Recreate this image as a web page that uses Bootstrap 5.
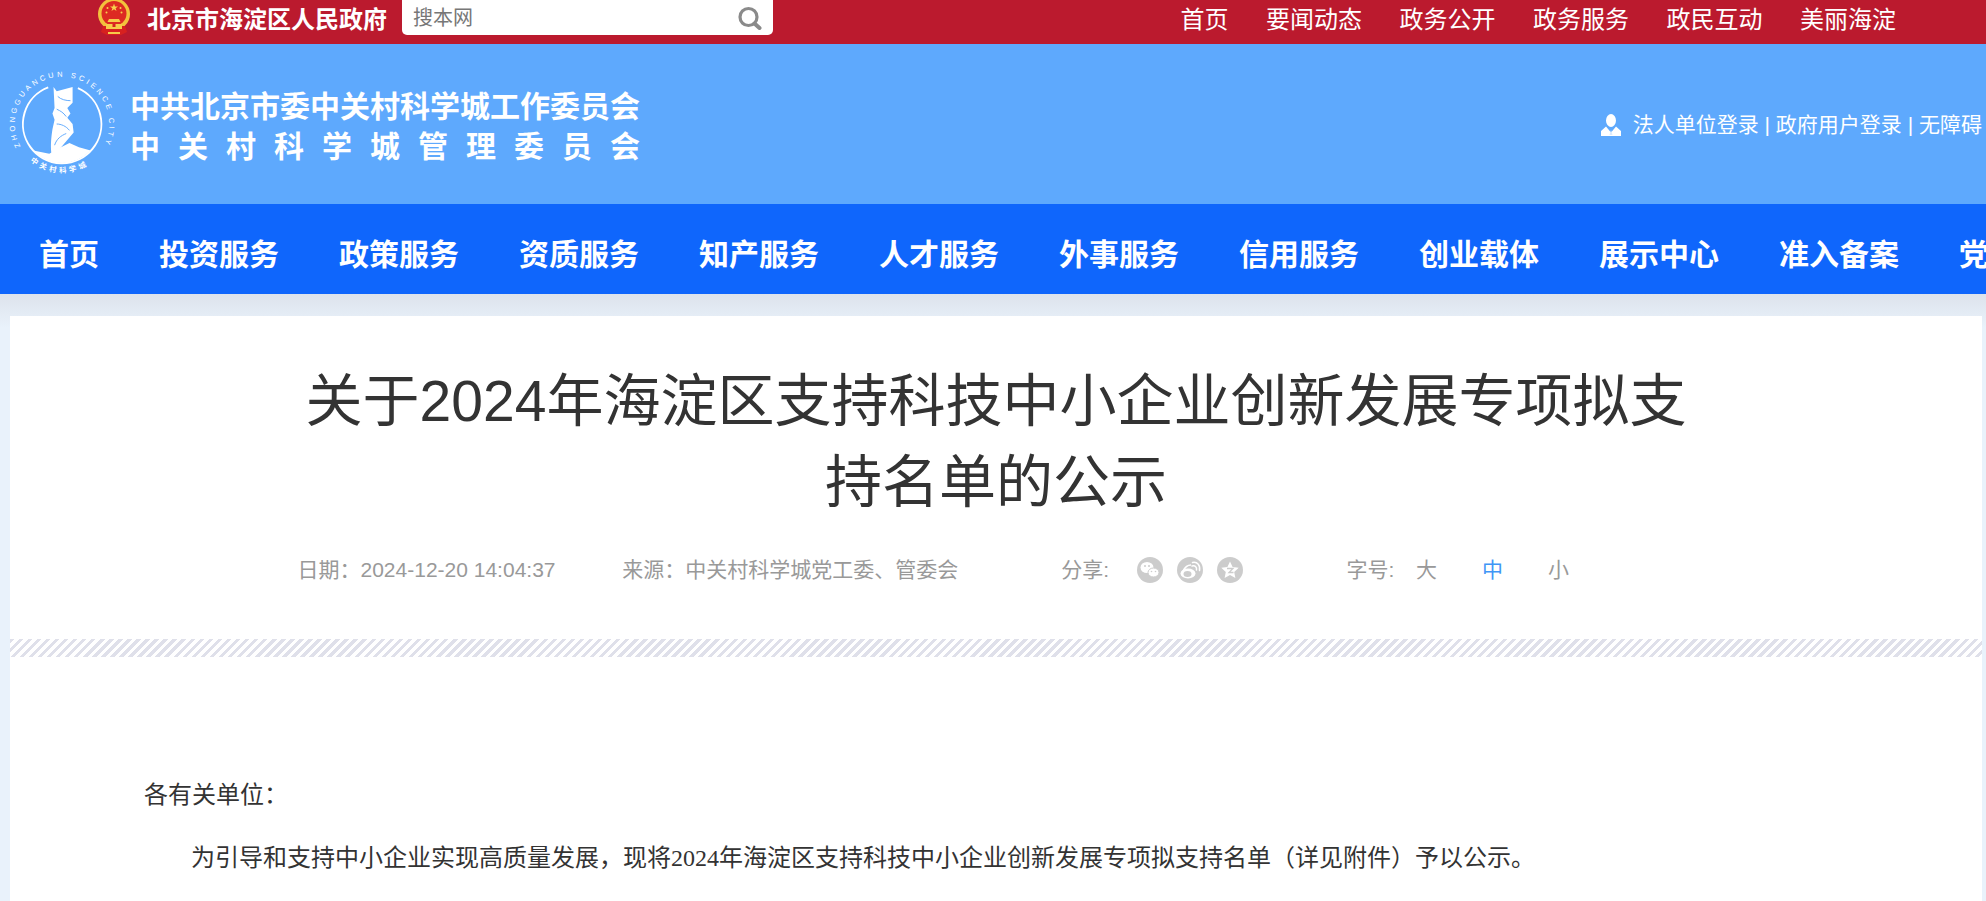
<!DOCTYPE html>
<html lang="zh-CN">
<head>
  <meta charset="UTF-8">
  <meta name="viewport" content="width=device-width, initial-scale=1.0">
  <title>关于2024年海淀区支持科技中小企业创新发展专项拟支持名单的公示</title>
  <link href="https://cdn.jsdelivr.net/npm/bootstrap@5.3.0/dist/css/bootstrap.min.css" rel="stylesheet">
  <style>
    body {
      background: #e9f2fb;
      font-family: "Liberation Sans", "Noto Sans CJK SC", sans-serif;
      min-height: 100vh;
      overflow-x: hidden;
    }

    /* 顶部红条 */
    .gov-bar {
      background: #bb1a2e;
      height: 44px;
      padding: 0 90px 0 97px;
    }
    .gov-emblem { width: 34px; height: 35px; }
    .gov-name {
      color: #fff;
      font-size: 24px;
      font-weight: 700;
      line-height: 40px;
      margin: 0 15px 0 16px;
      white-space: nowrap;
    }
    .gov-search {
      background: #fff;
      width: 371px;
      height: 35px;
      border-radius: 0 0 5px 5px;
      padding: 0 9px 0 11px;
      font-size: 20px;
      color: #777;
    }
    .gov-menu { gap: 37.5px; }
    .gov-menu a {
      color: #fff;
      font-size: 24px;
      line-height: 40px;
      text-decoration: none;
      white-space: nowrap;
    }

    /* 蓝色页头 */
    .site-head {
      background: #5ea9fd;
      height: 160px;
      padding: 0 4px 0 9px;
    }
    .site-logo { width: 106px; height: 106px; margin-right: 15px; }
    .site-title {
      color: #fff;
      font-size: 30px;
      font-weight: 700;
      line-height: 40px;
      padding-top: 5px;
      white-space: nowrap;
    }
    .site-title .line-two { letter-spacing: 18px; }
    .site-login {
      color: #fff;
      font-size: 21px;
      padding-top: 2px;
      white-space: nowrap;
    }
    .site-login svg { width: 20px; height: 22px; margin-right: 12px; }

    /* 主导航 */
    .main-menu {
      background: #0f66fc;
      height: 90px;
      overflow: hidden;
      padding-left: 9px;
    }
    .main-menu .nav-link {
      color: #fff;
      font-size: 30px;
      font-weight: 700;
      line-height: 84px;
      padding: 9px 30px 0;
      white-space: nowrap;
    }

    /* 正文 */
    .page-shade {
      background: #e9f2fb linear-gradient(to bottom, #dde3ec, #e9f2fb) no-repeat;
      background-size: 100% 34px;
      padding: 22px 4px 0 10px;
    }
    .article-box {
      background: #fff;
      min-height: 585px;
    }
    .article-title {
      color: #333;
      font-size: 57px;
      font-weight: 400;
      line-height: 81px;
      max-width: 1400px;
      margin: 0 auto;
      padding-top: 45px;
      text-align: center;
    }
    .article-meta {
      color: #999;
      font-size: 21px;
      line-height: 30px;
      height: 30px;
      margin-top: 32px;
      padding-left: 287.5px;
      white-space: nowrap;
    }
    .meta-source { margin-left: 66.7px; }
    .meta-share { margin-left: 103px; }
    .share-icons { gap: 14px; margin: 0 103.5px 0 28px; }
    .share-icons svg { width: 26px; height: 26px; }
    .size-switch { gap: 45px; margin-left: 21.5px; }
    .size-on { color: #3f96f6; }
    .hatch-line {
      height: 18px;
      margin-top: 54px;
      background: repeating-linear-gradient(135deg, #dfe0ea 0 3.2px, #fff 3.2px 6.4px);
    }
    .article-body {
      color: #333;
      font-family: "Liberation Serif", "Noto Sans CJK SC", serif;
      font-size: 24px;
      line-height: 36px;
      padding: 120px 134px 0;
    }
    .article-body p { margin-bottom: 27px; }
    .article-body .indent { text-indent: 47px; }
  </style>
</head>
<body>

  <!-- 北京市海淀区人民政府 -->
  <div class="gov-bar d-flex align-items-start justify-content-between">
    <div class="d-flex align-items-start">
      <svg class="gov-emblem" viewBox="0 0 34 35">
        <circle cx="17" cy="14" r="16" fill="#f3c23c"/>
        <circle cx="17" cy="13.500" r="12.500" fill="#dd2a22"/>
        <path d="M6 26h22l2 6-6 3H10l-6-3z" fill="#d7211f"/>
        <path d="M9 24h16v5H9zM12 19h10l1.500 3h-13z" fill="#f6cb4a"/>
        <path d="M11 32h12v2H11z" fill="#f6cb4a"/>
        <path d="M15.500 24h3v3h-3z" fill="#d7211f"/>
        <path d="M17 3.500l1 2.900h3l-2.400 1.800.9 2.900-2.500-1.800-2.500 1.800.9-2.900-2.400-1.800h3z" fill="#f8d34e"/>
        <circle cx="10.500" cy="8" r="1" fill="#f8d34e"/>
        <circle cx="23.500" cy="8" r="1" fill="#f8d34e"/>
        <circle cx="9.500" cy="12.500" r="1" fill="#f8d34e"/>
        <circle cx="24.500" cy="12.500" r="1" fill="#f8d34e"/>
      </svg>
      <div class="gov-name">北京市海淀区人民政府</div>
      <div class="gov-search d-flex align-items-center justify-content-between">
        <span>搜本网</span>
        <svg width="28" height="24" viewBox="0 0 28 24" fill="none" stroke="#8a8a8a">
          <circle cx="12.500" cy="11" r="8.500" stroke-width="3.200"/>
          <path d="M18.500 17.500l5 4.500" stroke-width="4" stroke-linecap="round"/>
        </svg>
      </div>
    </div>
    <div class="gov-menu d-flex">
      <a href="#">首页</a>
      <a href="#">要闻动态</a>
      <a href="#">政务公开</a>
      <a href="#">政务服务</a>
      <a href="#">政民互动</a>
      <a href="#">美丽海淀</a>
    </div>
  </div>

  <!-- 页头 -->
  <header class="site-head d-flex align-items-center justify-content-between">
    <div class="d-flex align-items-center">
      <svg class="site-logo" viewBox="0 0 100 100">
        <defs>
          <path id="ringTop" d="M10.800 71A44.500 44.500 0 1 1 89.200 71"/>
          <path id="ringBottom" d="M20 85A46 46 0 0 0 80 85"/>
        </defs>
        <text font-family="Liberation Sans" font-size="7" fill="#fff"><textPath href="#ringTop" textLength="180" lengthAdjust="spacing">ZHONGGUANCUN SCIENCE CITY</textPath></text>
        <text font-family="Noto Sans CJK SC" font-size="7" font-weight="700" fill="#fff" letter-spacing="3"><textPath href="#ringBottom">中关村科学城</textPath></text>
        <path d="M37 15.500A37 37 0 1 0 65 16.200" fill="none" stroke="#fff" stroke-width="1.800"/>
        <path d="M23 75A37 37 0 0 0 77 75L66 72 57 68 49 72 38 78z" fill="#fff"/>
        <path d="M42 15l3 4 15-4v15l-5 5 3 5-3 4 5 6 1 8-17 20h-4c-1-9 0-16 1-23l2-9-2-6 2-5z" fill="#fff"/>
        <path d="M46 24c3 3 8 4 12 4M45 36c4 2 6 3 9 7M45 50c4 0 9 2 12 6M43 70c2-6 6-9 11-11" fill="none" stroke="#5ea9fd" stroke-width=".9"/>
      </svg>
      <div class="site-title">
        <div>中共北京市委中关村科学城工作委员会</div>
        <div class="line-two">中关村科学城管理委员会</div>
      </div>
    </div>
    <div class="site-login d-flex align-items-center">
      <svg viewBox="0 0 20 22">
        <ellipse cx="10" cy="6.500" rx="5" ry="6.500" fill="#fff"/>
        <path d="M5 12.500L0 17v5h20v-5l-5-4.500-5 6z" fill="#fff"/>
        <path d="M10 16l-1.500 5h3z" fill="#dcebfd"/>
      </svg>
      <span>法人单位登录 | 政府用户登录 | 无障碍</span>
    </div>
  </header>

  <!-- 主导航 -->
  <ul class="main-menu nav flex-nowrap">
    <li class="nav-item"><a class="nav-link" href="#">首页</a></li>
    <li class="nav-item"><a class="nav-link" href="#">投资服务</a></li>
    <li class="nav-item"><a class="nav-link" href="#">政策服务</a></li>
    <li class="nav-item"><a class="nav-link" href="#">资质服务</a></li>
    <li class="nav-item"><a class="nav-link" href="#">知产服务</a></li>
    <li class="nav-item"><a class="nav-link" href="#">人才服务</a></li>
    <li class="nav-item"><a class="nav-link" href="#">外事服务</a></li>
    <li class="nav-item"><a class="nav-link" href="#">信用服务</a></li>
    <li class="nav-item"><a class="nav-link" href="#">创业载体</a></li>
    <li class="nav-item"><a class="nav-link" href="#">展示中心</a></li>
    <li class="nav-item"><a class="nav-link" href="#">准入备案</a></li>
    <li class="nav-item"><a class="nav-link" href="#">党群服务</a></li>
  </ul>

  <div class="page-shade">
    <main class="article-box">
      <h1 class="article-title">关于2024年海淀区支持科技中小企业创新发展专项拟支持名单的公示</h1>

      <div class="article-meta d-flex align-items-center">
        <span>日期：2024-12-20 14:04:37</span>
        <span class="meta-source">来源：中关村科学城党工委、管委会</span>
        <span class="meta-share">分享:</span>
        <div class="share-icons d-flex">
          <svg viewBox="0 0 26 26">
            <circle cx="13" cy="13" r="13" fill="#ccc"/>
            <ellipse cx="10" cy="10.500" rx="6.500" ry="5.500" fill="#fff"/>
            <ellipse cx="16.500" cy="15.500" rx="5.500" ry="4.500" fill="#fff" stroke="#ccc"/>
            <circle cx="8" cy="9" r="1" fill="#ccc"/>
            <circle cx="12" cy="9" r="1" fill="#ccc"/>
            <circle cx="14.500" cy="14.500" r=".8" fill="#ccc"/>
            <circle cx="18.500" cy="14.500" r=".8" fill="#ccc"/>
          </svg>
          <svg viewBox="0 0 26 26">
            <circle cx="13" cy="13" r="13" fill="#ccc"/>
            <ellipse cx="11" cy="16.500" rx="7.500" ry="5" fill="#fff"/>
            <ellipse cx="10.500" cy="17" rx="4" ry="3" fill="#ccc"/>
            <path d="M6 14c2-4 5-6 8-6" fill="none" stroke="#fff" stroke-width="1.500"/>
            <path d="M15 9c3-1 5 1 4.500 4M15.500 5.500c5-1 8 3 7 8" fill="none" stroke="#fff" stroke-width="1.500" stroke-linecap="round"/>
          </svg>
          <svg viewBox="0 0 26 26">
            <circle cx="13" cy="13" r="13" fill="#ccc"/>
            <path d="M13 4.500l2.600 5.600 6.100.7-4.500 4.200 1.200 6-5.400-3-5.400 3 1.200-6-4.500-4.200 6.100-.7z" fill="#fff"/>
            <path d="M10 11.500h6l-4 4h4.500" fill="none" stroke="#ccc" stroke-width="1.300"/>
          </svg>
        </div>
        <span>字号:</span>
        <div class="size-switch d-flex">
          <span>大</span>
          <span class="size-on">中</span>
          <span>小</span>
        </div>
      </div>

      <div class="hatch-line"></div>

      <div class="article-body">
        <p>各有关单位：</p>
        <p class="indent">为引导和支持中小企业实现高质量发展，现将2024年海淀区支持科技中小企业创新发展专项拟支持名单（详见附件）予以公示。</p>
      </div>
    </main>
  </div>

  <script src="https://cdn.jsdelivr.net/npm/bootstrap@5.3.0/dist/js/bootstrap.bundle.min.js"></script>
</body>
</html>
